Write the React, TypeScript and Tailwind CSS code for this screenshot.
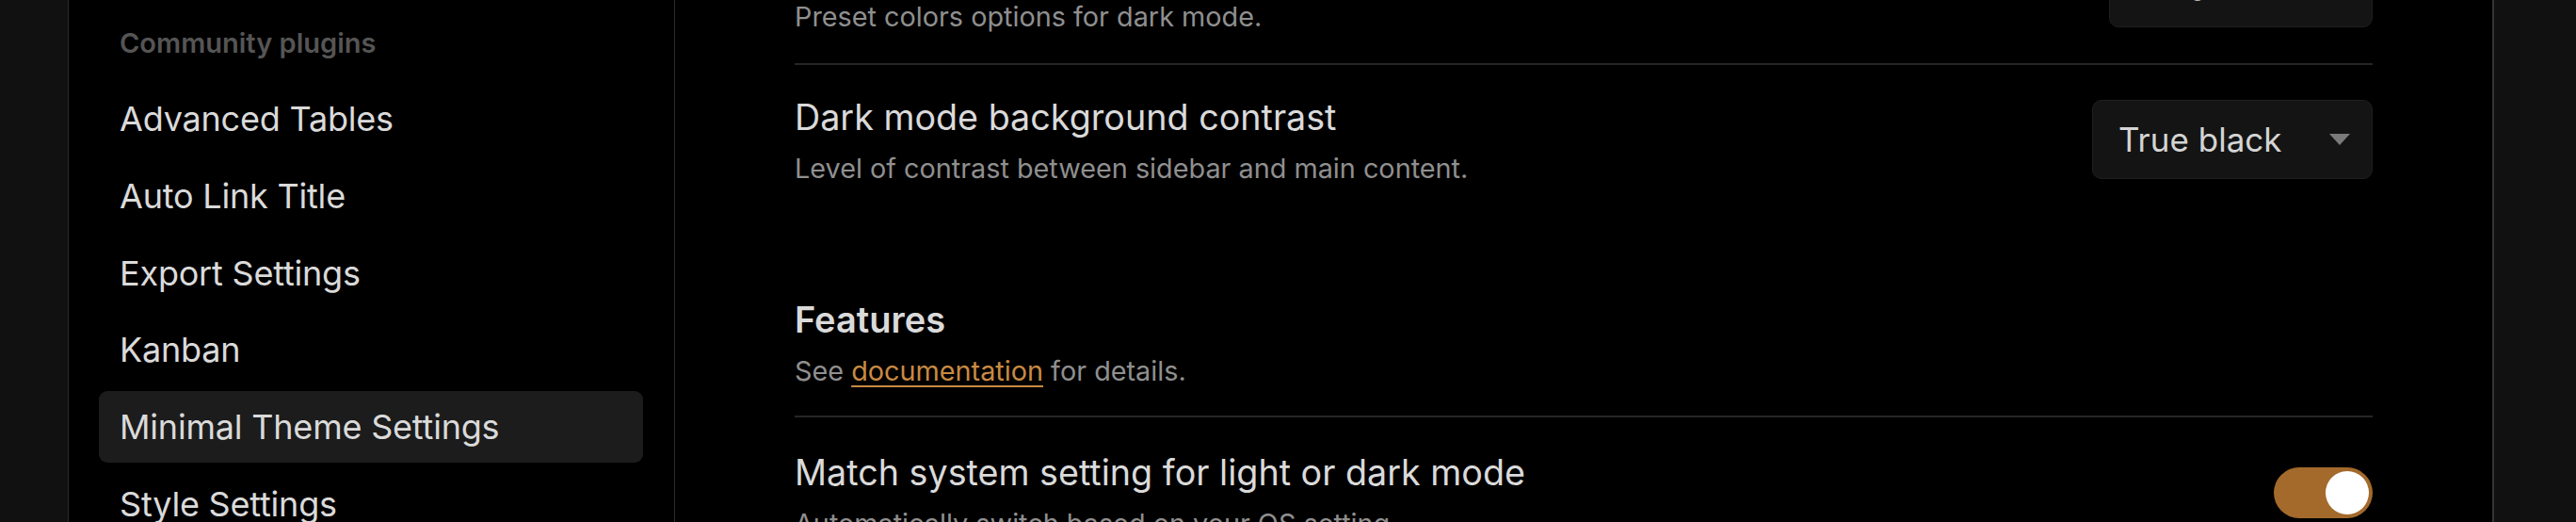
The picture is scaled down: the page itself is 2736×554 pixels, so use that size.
// Obsidian settings modal — Minimal Theme Settings, dark mode, scrolled view.

const font = { fontFamily: 'Inter, "Noto Sans", sans-serif' }

const plugins = [
  'Advanced Tables',
  'Auto Link Title',
  'Export Settings',
  'Kanban',
  'Minimal Theme Settings',
  'Style Settings',
]

// ─── Small controls ──────────────────────────────────────────────────────────

function Dropdown({ value, width }: { value: string; width: string }) {
  return (
    <div
      className={`${width} mt-[4px] h-[84px] shrink-0 flex items-center justify-between rounded-[10px] border border-[#1f1f1f] bg-[#141414] pl-[27px] pr-[23px]`}
    >
      <span className="text-[35px] leading-[44px] text-[#d4d4d4]">{value}</span>
      <svg width="22" height="12" viewBox="0 0 22 12">
        <path d="M0 0 H22 L11 12 Z" fill="#7a7a7a" />
      </svg>
    </div>
  )
}

function Toggle() {
  return (
    <div className="mt-[17px] w-[105px] h-[54px] shrink-0 flex items-center justify-end rounded-full bg-[#a36a2c] pr-[4px]">
      <div className="w-[46px] h-[46px] rounded-full bg-white" />
    </div>
  )
}

function SettingItem({
  name,
  desc,
  control,
  className,
}: {
  name: string
  desc: string
  control: React.ReactNode
  className: string
}) {
  return (
    <div className={`flex items-start justify-between gap-8 ${className}`}>
      <div className="flex flex-col">
        <div className="text-[37.7px] leading-[44px] text-[#dadada]">{name}</div>
        <div className="mt-[13px] text-[28.8px] leading-[40px] text-[#8f8f8f]">{desc}</div>
      </div>
      {control}
    </div>
  )
}

// ─── Page ────────────────────────────────────────────────────────────────────

export default function App() {
  return (
    <div className="flex h-[554px] w-full overflow-hidden bg-[#111111]" style={font}>
      <div className="w-[72px] shrink-0" />

      <div className="flex shrink-0 border-l border-r-2 border-l-[#2c2c2c] border-r-[#333333] bg-black">
        {/* Sidebar */}
        <aside className="w-[644px] shrink-0 border-r border-[#2a2a2a] pl-[32px] pr-[33px] pt-[28px]">
          <div className="pl-[22px] text-[29px] leading-[36px] font-semibold text-[#555555]">
            Community plugins
          </div>
          <nav className="mt-[24px] flex flex-col gap-[5.75px]">
            {plugins.map((p) => (
              <div
                key={p}
                className={`flex h-[76px] items-center rounded-[9px] pl-[22px] text-[36px] leading-[44px] tracking-[-0.2px] text-[#dadada] ${
                  p === 'Minimal Theme Settings' ? 'bg-[#1c1c1c]' : ''
                }`}
              >
                {p}
              </div>
            ))}
          </nav>
        </aside>

        {/* Main content, scrolled */}
        <main className="w-[1930px] shrink-0 overflow-hidden px-[127px]">
          <div className="-mt-[93px] flex flex-col">
            <SettingItem
              name="Dark mode color scheme"
              desc="Preset colors options for dark mode."
              control={<Dropdown value="Default" width="w-[280px]" />}
              className="pt-[34px] pb-[29px]"
            />
            <SettingItem
              name="Dark mode background contrast"
              desc="Level of contrast between sidebar and main content."
              control={<Dropdown value="True black" width="w-[298px]" />}
              className="border-t-2 border-[#262626] pt-[33px] pb-[8px]"
            />

            {/* Heading */}
            <div className="pt-[109px] pb-[27px]">
              <div className="text-[38px] leading-[46px] font-semibold text-[#dadada]">Features</div>
              <div className="mt-[12px] text-[28.8px] leading-[40px] text-[#8f8f8f]">
                See{' '}
                <span className="text-[#c98a42] underline underline-offset-[5px] decoration-2">
                  documentation
                </span>{' '}
                for details.
              </div>
            </div>

            <SettingItem
              name="Match system setting for light or dark mode"
              desc="Automatically switch based on your OS setting."
              control={<Toggle />}
              className="border-t-2 border-[#262626] pt-[36px] pb-[30px]"
            />
          </div>
        </main>
      </div>

      <div className="flex-1" />
    </div>
  )
}
